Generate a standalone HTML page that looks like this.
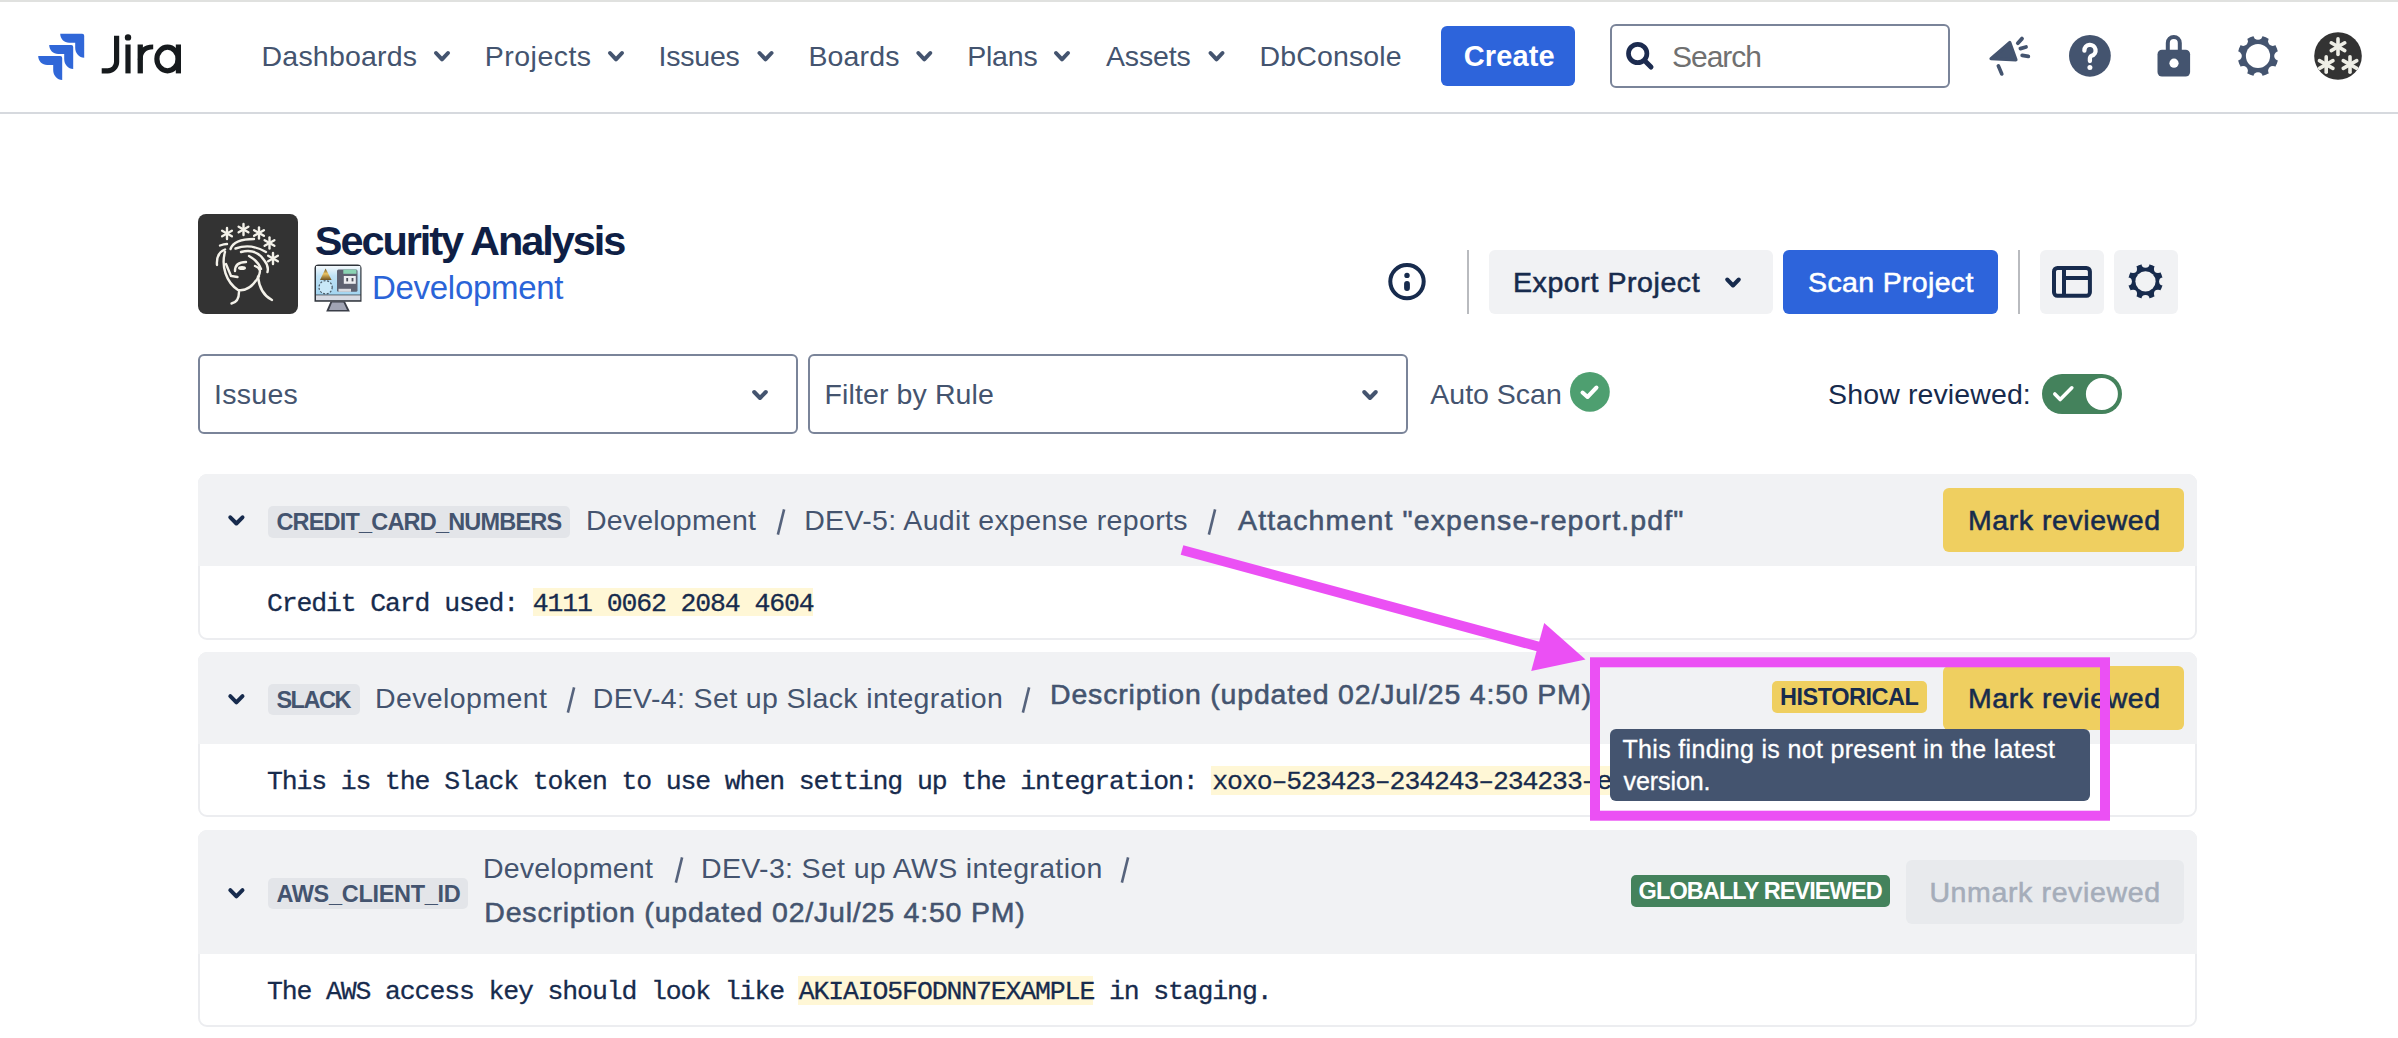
<!DOCTYPE html>
<html><head><meta charset="utf-8"><style>
html,body{margin:0;padding:0;background:#fff;width:2398px;height:1038px;overflow:hidden;position:relative}
.t{position:absolute;white-space:nowrap;font-family:"Liberation Sans",sans-serif}
.r{position:absolute}
.m{position:absolute;white-space:nowrap}
</style></head><body>
<div class="r" style="left:0px;top:0px;width:2398px;height:2px;background:#E0E1DF;border-radius:0px;"></div>
<div class="r" style="left:0px;top:112px;width:2398px;height:2px;background:#D6D9DE;border-radius:0px;"></div>
<svg class="r" style="left:0;top:0" width="120" height="100"><path transform="translate(60.2,33.7)" d="M0,0 H22 Q24,0 24,2 V24 C19,24 15,19.5 15,14 V9 H9 C4,9 0,5 0,0 Z" fill="#3067D8"/><path transform="translate(49.2,44.9)" d="M0,0 H22 Q24,0 24,2 V24 C19,24 15,19.5 15,14 V9 H9 C4,9 0,5 0,0 Z" fill="#3067D8"/><path transform="translate(38.2,56.1)" d="M0,0 H22 Q24,0 24,2 V24 C19,24 15,19.5 15,14 V9 H9 C4,9 0,5 0,0 Z" fill="#3067D8"/></svg>
<svg class="r" style="left:0;top:0" width="200" height="100"><g fill="#161A1D"><rect x="125.4" y="44.5" width="5.2" height="28.9"/><circle cx="128" cy="37.4" r="3.2"/><rect x="137.6" y="44.5" width="5.3" height="28.9"/><rect x="175.8" y="44.5" width="5.2" height="28.9"/></g><g fill="none" stroke="#161A1D" stroke-width="5.2"><path d="M116.6,35.8 V62 A8.8,8.8 0 0 1 107.8,70.8 H101.7"/><path d="M140.2,60 Q140.2,46.8 153.2,46.8" stroke-width="4.8"/><ellipse cx="167.5" cy="59" rx="10.6" ry="11.8"/></g></svg>
<div class="t" style="left:261.60px;top:41.91px;font-size:28.5px;line-height:28.5px;color:#44546F;letter-spacing:0.198px;">Dashboards</div>
<svg class="r" style="left:0;top:0" width="2398" height="1038"><polyline points="436.0,53.0 442,59.400000000000006 448.0,53.0" fill="none" stroke="#44546F" stroke-width="4.0" stroke-linecap="round" stroke-linejoin="round"/></svg>
<div class="t" style="left:484.80px;top:41.91px;font-size:28.5px;line-height:28.5px;color:#44546F;letter-spacing:0.474px;">Projects</div>
<svg class="r" style="left:0;top:0" width="2398" height="1038"><polyline points="610.0,53.0 616,59.400000000000006 622.0,53.0" fill="none" stroke="#44546F" stroke-width="4.0" stroke-linecap="round" stroke-linejoin="round"/></svg>
<div class="t" style="left:658.60px;top:41.91px;font-size:28.5px;line-height:28.5px;color:#44546F;letter-spacing:-0.233px;">Issues</div>
<svg class="r" style="left:0;top:0" width="2398" height="1038"><polyline points="759.5,53.0 765.5,59.400000000000006 771.5,53.0" fill="none" stroke="#44546F" stroke-width="4.0" stroke-linecap="round" stroke-linejoin="round"/></svg>
<div class="t" style="left:808.40px;top:41.91px;font-size:28.5px;line-height:28.5px;color:#44546F;letter-spacing:0.171px;">Boards</div>
<svg class="r" style="left:0;top:0" width="2398" height="1038"><polyline points="918.3,53.0 924.3,59.400000000000006 930.3,53.0" fill="none" stroke="#44546F" stroke-width="4.0" stroke-linecap="round" stroke-linejoin="round"/></svg>
<div class="t" style="left:967.20px;top:41.91px;font-size:28.5px;line-height:28.5px;color:#44546F;letter-spacing:-0.213px;">Plans</div>
<svg class="r" style="left:0;top:0" width="2398" height="1038"><polyline points="1056.0,53.0 1062,59.400000000000006 1068.0,53.0" fill="none" stroke="#44546F" stroke-width="4.0" stroke-linecap="round" stroke-linejoin="round"/></svg>
<div class="t" style="left:1106.00px;top:41.91px;font-size:28.5px;line-height:28.5px;color:#44546F;letter-spacing:-0.140px;">Assets</div>
<svg class="r" style="left:0;top:0" width="2398" height="1038"><polyline points="1210.5,53.0 1216.5,59.400000000000006 1222.5,53.0" fill="none" stroke="#44546F" stroke-width="4.0" stroke-linecap="round" stroke-linejoin="round"/></svg>
<div class="t" style="left:1259.60px;top:41.91px;font-size:28.5px;line-height:28.5px;color:#44546F;letter-spacing:0.133px;">DbConsole</div>
<div class="r" style="left:1441px;top:26px;width:134px;height:60px;background:#2D64DB;border-radius:6px;"></div>
<div class="t" style="left:1463.80px;top:42.10px;font-size:29.0px;line-height:29.0px;color:#FFFFFF;letter-spacing:0.093px;font-weight:700;">Create</div>
<div class="r" style="left:1610px;top:24px;width:340px;height:64px;background:#FFFFFF;border-radius:6px;border:2px solid #7A8499;box-sizing:border-box;"></div>
<svg class="r" style="left:0;top:0" width="2398" height="120"><circle cx="1637.7" cy="53.5" r="9.2" fill="none" stroke="#1C2B4F" stroke-width="4.7"/><line x1="1646" y1="62" x2="1651" y2="67" stroke="#1C2B4F" stroke-width="5" stroke-linecap="round"/></svg>
<div class="t" style="left:1672.00px;top:41.91px;font-size:30.0px;line-height:30.0px;color:#707070;letter-spacing:-1.020px;">Search</div>
<svg class="r" style="left:0;top:0" width="2398" height="120"><path d="M1991,58.6 L2009.8,42.5 L2016,59.8 Z" fill="#44546F" stroke="#44546F" stroke-width="3.2" stroke-linejoin="round"/><line x1="1998.3" y1="65.8" x2="2001.8" y2="74" stroke="#44546F" stroke-width="3.6" stroke-linecap="round"/><line x1="2017.8" y1="43.2" x2="2022" y2="38.6" stroke="#44546F" stroke-width="3.8" stroke-linecap="round"/><line x1="2020.4" y1="48.6" x2="2026" y2="47" stroke="#44546F" stroke-width="3.8" stroke-linecap="round"/><line x1="2022.2" y1="55.4" x2="2028.3" y2="56.4" stroke="#44546F" stroke-width="3.8" stroke-linecap="round"/><circle cx="2089.9" cy="55.8" r="20.9" fill="#44546F"/><path d="M2084.4,50.6 A5.6,5.6 0 1 1 2091.5,55.8 Q2089.9,56.6 2089.9,58.6 V61" fill="none" stroke="#fff" stroke-width="4.3" stroke-linecap="round"/><circle cx="2089.9" cy="67.6" r="2.5" fill="#fff"/><rect x="2157.5" y="49.7" width="32.6" height="26.8" rx="4.5" fill="#44546F"/><path d="M2167.8,50 V43 A6,6 0 0 1 2179.8,43 V50" fill="none" stroke="#44546F" stroke-width="4"/><circle cx="2174" cy="63.2" r="4.6" fill="#fff"/><circle cx="2338" cy="56" r="23.8" fill="#333333"/></svg>
<svg class="r" style="left:0;top:0" width="2398" height="120"><mask id="g1"><rect x="2235.6" y="33.6" width="44.8" height="44.8" fill="#fff"/><circle cx="2258.00" cy="35.10" r="4.7" fill="#000"/><circle cx="2272.78" cy="41.22" r="4.7" fill="#000"/><circle cx="2278.90" cy="56.00" r="4.7" fill="#000"/><circle cx="2272.78" cy="70.78" r="4.7" fill="#000"/><circle cx="2258.00" cy="76.90" r="4.7" fill="#000"/><circle cx="2243.22" cy="70.78" r="4.7" fill="#000"/><circle cx="2237.10" cy="56.00" r="4.7" fill="#000"/><circle cx="2243.22" cy="41.22" r="4.7" fill="#000"/><circle cx="2258" cy="56" r="12.1" fill="#000"/></mask><circle cx="2258" cy="56" r="20.4" fill="#44546F" mask="url(#g1)"/></svg>
<svg class="r" style="left:0;top:0" width="2398" height="120"><defs><clipPath id="avc"><circle cx="2338" cy="56" r="23.8"/></clipPath><filter id="avb" x="-10%" y="-10%" width="120%" height="120%"><feGaussianBlur stdDeviation="0.7"/></filter></defs><g clip-path="url(#avc)" filter="url(#avb)"><line x1="2338.00" y1="38.90" x2="2338.00" y2="54.50" stroke="#EEEEE6" stroke-width="3.6" stroke-linecap="round"/><line x1="2331.25" y1="42.80" x2="2344.75" y2="50.60" stroke="#EEEEE6" stroke-width="3.6" stroke-linecap="round"/><line x1="2331.25" y1="50.60" x2="2344.75" y2="42.80" stroke="#EEEEE6" stroke-width="3.6" stroke-linecap="round"/><line x1="2326.20" y1="56.70" x2="2326.20" y2="72.30" stroke="#EEEEE6" stroke-width="3.6" stroke-linecap="round"/><line x1="2319.45" y1="60.60" x2="2332.95" y2="68.40" stroke="#EEEEE6" stroke-width="3.6" stroke-linecap="round"/><line x1="2319.45" y1="68.40" x2="2332.95" y2="60.60" stroke="#EEEEE6" stroke-width="3.6" stroke-linecap="round"/><line x1="2350.00" y1="56.70" x2="2350.00" y2="72.30" stroke="#EEEEE6" stroke-width="3.6" stroke-linecap="round"/><line x1="2343.25" y1="60.60" x2="2356.75" y2="68.40" stroke="#EEEEE6" stroke-width="3.6" stroke-linecap="round"/><line x1="2343.25" y1="68.40" x2="2356.75" y2="60.60" stroke="#EEEEE6" stroke-width="3.6" stroke-linecap="round"/></g></svg>
<div class="r" style="left:198px;top:214px;width:100px;height:100px;background:#333333;border-radius:8px;"></div>
<svg class="r" style="left:198px;top:214px" width="100" height="100" viewBox="0 0 100 100"><g fill="none" stroke="#F4F2EA" stroke-width="2.4" stroke-linecap="round"><path d="M32.5,35 Q36,25 56,25"/><path d="M37.5,34.5 Q53,29 68,38"/><path d="M43,38 Q58,34 66,46 Q71,52 69.5,58"/><path d="M22,31.5 Q26,30 29,30"/><path d="M19,51 Q18,39 27,35.5"/><path d="M27,38 C23,52 28,68 40,76 Q52,78 61,62"/><path d="M41,78 Q41,88 33.5,89.5"/><path d="M60,63 Q62,80 74,86"/><path d="M57,52 Q65,55 60,63"/><path d="M37,57 Q37,48 48,48"/><path d="M28,50 L33,62 L39.5,63"/><path d="M51,42 Q60,47 63,55"/></g><g><line x1="29.00" y1="13.90" x2="29.00" y2="25.10" stroke="#F4F2EA" stroke-width="2.4" stroke-linecap="round"/><line x1="24.15" y1="16.70" x2="33.85" y2="22.30" stroke="#F4F2EA" stroke-width="2.4" stroke-linecap="round"/><line x1="24.15" y1="22.30" x2="33.85" y2="16.70" stroke="#F4F2EA" stroke-width="2.4" stroke-linecap="round"/><line x1="45.50" y1="9.90" x2="45.50" y2="21.10" stroke="#F4F2EA" stroke-width="2.4" stroke-linecap="round"/><line x1="40.65" y1="12.70" x2="50.35" y2="18.30" stroke="#F4F2EA" stroke-width="2.4" stroke-linecap="round"/><line x1="40.65" y1="18.30" x2="50.35" y2="12.70" stroke="#F4F2EA" stroke-width="2.4" stroke-linecap="round"/><line x1="61.00" y1="13.40" x2="61.00" y2="24.60" stroke="#F4F2EA" stroke-width="2.4" stroke-linecap="round"/><line x1="56.15" y1="16.20" x2="65.85" y2="21.80" stroke="#F4F2EA" stroke-width="2.4" stroke-linecap="round"/><line x1="56.15" y1="21.80" x2="65.85" y2="16.20" stroke="#F4F2EA" stroke-width="2.4" stroke-linecap="round"/><line x1="71.50" y1="23.40" x2="71.50" y2="34.60" stroke="#F4F2EA" stroke-width="2.4" stroke-linecap="round"/><line x1="66.65" y1="26.20" x2="76.35" y2="31.80" stroke="#F4F2EA" stroke-width="2.4" stroke-linecap="round"/><line x1="66.65" y1="31.80" x2="76.35" y2="26.20" stroke="#F4F2EA" stroke-width="2.4" stroke-linecap="round"/><line x1="75.00" y1="38.90" x2="75.00" y2="50.10" stroke="#F4F2EA" stroke-width="2.4" stroke-linecap="round"/><line x1="70.15" y1="41.70" x2="79.85" y2="47.30" stroke="#F4F2EA" stroke-width="2.4" stroke-linecap="round"/><line x1="70.15" y1="47.30" x2="79.85" y2="41.70" stroke="#F4F2EA" stroke-width="2.4" stroke-linecap="round"/><ellipse cx="44" cy="54" rx="4" ry="2" fill="#F4F2EA"/></g></svg>
<div class="t" style="left:314.80px;top:220.01px;font-size:41.5px;line-height:41.5px;color:#0F1F45;letter-spacing:-2.053px;font-weight:700;">Security Analysis</div>
<svg class="r" style="left:314px;top:264px" width="48" height="48" viewBox="0 0 48 48"><defs><linearGradient id="scr" x1="0" y1="0" x2="0" y2="1"><stop offset="0" stop-color="#F4F9FC"/><stop offset="0.35" stop-color="#BFE2F5"/><stop offset="1" stop-color="#A3D5F1"/></linearGradient><linearGradient id="cone" x1="0" y1="0" x2="0" y2="1"><stop offset="0" stop-color="#6B5120"/><stop offset="0.45" stop-color="#EBC463"/><stop offset="1" stop-color="#6E5220"/></linearGradient></defs><path d="M0.5,4.5 Q0.5,0.5 4.5,0.5 H43.5 Q47.5,0.5 47.5,4.5 V37.8 H0.5 Z" fill="#2F343B"/><rect x="2" y="2" width="44.3" height="28.6" fill="url(#scr)"/><rect x="2" y="31.3" width="44.3" height="4.9" fill="#D6DAE3"/><path d="M16.5,37.6 H31 L35.9,47.6 H12.2 Z" fill="#3A3E48"/><path d="M18,38.5 H29.5 L33,46 H15 Z" fill="#A0A4B4"/><circle cx="11.6" cy="23.3" r="6.6" fill="#C9E8F8" stroke="#4A5A66" stroke-width="1.2" stroke-dasharray="2 1.6"/><path d="M6,16 L11.6,4.6 L17.6,16 Z" fill="url(#cone)"/><rect x="23" y="5.5" width="20.5" height="22.3" rx="1.5" fill="#5E6271"/><rect x="24.5" y="24.8" width="12.5" height="3" fill="#D9DBE1"/><rect x="29.3" y="5.6" width="13.2" height="4.2" fill="#8AD3B2"/><rect x="29.8" y="12" width="12" height="7.8" fill="#ECEDF0"/><rect x="32.3" y="14" width="1.8" height="3.4" fill="#4B4F5A"/><rect x="37.6" y="14" width="1.8" height="3.4" fill="#4B4F5A"/></svg>
<div class="t" style="left:372.00px;top:271.31px;font-size:33.0px;line-height:33.0px;color:#2A64D8;letter-spacing:-0.297px;">Development</div>
<svg class="r" style="left:0;top:0" width="2398" height="330"><circle cx="1407" cy="281.6" r="16.7" fill="none" stroke="#172B4D" stroke-width="4"/><circle cx="1407" cy="275.4" r="2.7" fill="#172B4D"/><line x1="1407" y1="284" x2="1407" y2="288" stroke="#172B4D" stroke-width="5.8" stroke-linecap="round"/></svg>
<div class="r" style="left:1467px;top:250px;width:2px;height:64px;background:#B9BBBF;border-radius:0px;"></div>
<div class="r" style="left:1489px;top:250px;width:284px;height:64px;background:#F1F2F4;border-radius:6px;"></div>
<div class="t" style="left:1513.00px;top:267.80px;font-size:28.5px;line-height:28.5px;color:#172B4D;letter-spacing:0.586px;-webkit-text-stroke:0.55px #172B4D;">Export Project</div>
<svg class="r" style="left:0;top:0" width="2398" height="1038"><polyline points="1727.2,279.5 1733,285.5 1738.8,279.5" fill="none" stroke="#172B4D" stroke-width="4.0" stroke-linecap="round" stroke-linejoin="round"/></svg>
<div class="r" style="left:1783px;top:250px;width:215px;height:64px;background:#2D64DB;border-radius:6px;"></div>
<div class="t" style="left:1808.10px;top:267.80px;font-size:28.5px;line-height:28.5px;color:#FFFFFF;letter-spacing:0.337px;-webkit-text-stroke:0.55px #FFFFFF;">Scan Project</div>
<div class="r" style="left:2018px;top:250px;width:2px;height:64px;background:#B9BBBF;border-radius:0px;"></div>
<div class="r" style="left:2040px;top:250px;width:64px;height:64px;background:#F1F2F4;border-radius:6px;"></div>
<div class="r" style="left:2114px;top:250px;width:64px;height:64px;background:#F1F2F4;border-radius:6px;"></div>
<svg class="r" style="left:0;top:0" width="2398" height="330"><rect x="2054" y="267.9" width="35.9" height="27.9" rx="3.5" fill="none" stroke="#172B4D" stroke-width="4"/><line x1="2064" y1="268" x2="2064" y2="296" stroke="#172B4D" stroke-width="4"/><line x1="2064" y1="278" x2="2090" y2="278" stroke="#172B4D" stroke-width="4"/><mask id="g2"><rect x="2126.1" y="262.0" width="38.8" height="38.8" fill="#fff"/><circle cx="2145.50" cy="263.80" r="4.0" fill="#000"/><circle cx="2157.95" cy="268.95" r="4.0" fill="#000"/><circle cx="2163.10" cy="281.40" r="4.0" fill="#000"/><circle cx="2157.95" cy="293.85" r="4.0" fill="#000"/><circle cx="2145.50" cy="299.00" r="4.0" fill="#000"/><circle cx="2133.05" cy="293.85" r="4.0" fill="#000"/><circle cx="2127.90" cy="281.40" r="4.0" fill="#000"/><circle cx="2133.05" cy="268.95" r="4.0" fill="#000"/><circle cx="2145.5" cy="281.4" r="10.1" fill="#000"/></mask><circle cx="2145.5" cy="281.4" r="17.4" fill="#172B4D" mask="url(#g2)"/></svg>
<div class="r" style="left:198px;top:354px;width:600px;height:80px;background:#FFFFFF;border-radius:6px;border:2px solid #7A8499;box-sizing:border-box;"></div>
<div class="t" style="left:214.00px;top:379.90px;font-size:28.5px;line-height:28.5px;color:#44546F;letter-spacing:0.287px;">Issues</div>
<svg class="r" style="left:0;top:0" width="2398" height="1038"><polyline points="754.2,392.0 760,398.0 765.8,392.0" fill="none" stroke="#44546F" stroke-width="4.0" stroke-linecap="round" stroke-linejoin="round"/></svg>
<div class="r" style="left:808px;top:354px;width:600px;height:80px;background:#FFFFFF;border-radius:6px;border:2px solid #7A8499;box-sizing:border-box;"></div>
<div class="t" style="left:824.60px;top:379.90px;font-size:28.5px;line-height:28.5px;color:#44546F;letter-spacing:0.103px;">Filter by Rule</div>
<svg class="r" style="left:0;top:0" width="2398" height="1038"><polyline points="1364.2,392.0 1370,398.0 1375.8,392.0" fill="none" stroke="#44546F" stroke-width="4.0" stroke-linecap="round" stroke-linejoin="round"/></svg>
<div class="t" style="left:1430.30px;top:379.90px;font-size:28.5px;line-height:28.5px;color:#44546F;letter-spacing:-0.003px;">Auto Scan</div>
<svg class="r" style="left:0;top:0" width="2398" height="440"><circle cx="1589.9" cy="391.8" r="19.9" fill="#4E9F70"/><polyline points="1582.5,392.5 1587.5,397 1596.5,387.5" fill="none" stroke="#fff" stroke-width="4" stroke-linecap="round" stroke-linejoin="round"/><rect x="2042" y="374" width="80" height="40" rx="20" fill="#44825C"/><circle cx="2101.9" cy="394" r="16" fill="#fff"/><polyline points="2054.8,394 2060.2,399.5 2071.8,387.8" fill="none" stroke="#fff" stroke-width="3.6" stroke-linecap="round" stroke-linejoin="round"/></svg>
<div class="t" style="left:1828.10px;top:379.90px;font-size:28.5px;line-height:28.5px;color:#172B4D;letter-spacing:0.115px;">Show reviewed:</div>
<div class="r" style="left:198px;top:474px;width:1999px;height:166px;background:#FFFFFF;border-radius:9px;border:2px solid #ECEDF0;box-sizing:border-box;"></div><div class="r" style="left:198px;top:474px;width:1999px;height:92px;background:#F1F2F4;border-radius:0px;border-radius:9px 9px 0 0;"></div>
<svg class="r" style="left:0;top:0" width="2398" height="1038"><polyline points="230.3,517.3 236.4,523.5 242.5,517.3" fill="none" stroke="#172B4D" stroke-width="4.0" stroke-linecap="round" stroke-linejoin="round"/></svg>
<div class="r" style="left:268px;top:506.3px;width:302px;height:31.400000000000034px;background:#E3E5E9;border-radius:5px;"></div>
<div class="t" style="left:276.40px;top:511.30px;font-size:23.5px;line-height:23.5px;color:#44546F;letter-spacing:-0.807px;font-weight:700;">CREDIT_CARD_NUMBERS</div>
<div class="t" style="left:586.00px;top:506.30px;font-size:28.5px;line-height:28.5px;color:#44546F;letter-spacing:0.193px;">Development</div>
<svg class="r" style="left:776.4px;top:506.9px" width="10" height="30"><line x1="8.1" y1="2.3499999999999996" x2="1.9" y2="27.65" stroke="#56637C" stroke-width="2.6"/></svg>
<div class="t" style="left:804.20px;top:506.30px;font-size:28.5px;line-height:28.5px;color:#44546F;letter-spacing:0.351px;">DEV-5: Audit expense reports</div>
<svg class="r" style="left:1206.9px;top:506.9px" width="10" height="30"><line x1="8.1" y1="2.3499999999999996" x2="1.9" y2="27.65" stroke="#56637C" stroke-width="2.6"/></svg>
<div class="t" style="left:1238.00px;top:506.00px;font-size:28.5px;line-height:28.5px;color:#44546F;letter-spacing:1.129px;-webkit-text-stroke:0.55px #44546F;">Attachment "expense-report.pdf"</div>
<div class="r" style="left:1943px;top:488px;width:241px;height:64px;background:#EFCF60;border-radius:6px;"></div>
<div class="t" style="left:1968.00px;top:505.81px;font-size:28.5px;line-height:28.5px;color:#172B4D;letter-spacing:0.563px;-webkit-text-stroke:0.55px #172B4D;">Mark reviewed</div>
<div class="r" style="left:533px;top:588.4px;width:280.29999999999995px;height:28.0px;background:#FFF7D6;border-radius:0px;"></div>
<div class="m" style="left:266.90px;top:591px;font-family:'Liberation Mono',monospace;font-size:26.5px;line-height:26.5px;color:#172B4D;letter-spacing:-1.130px;-webkit-text-stroke:0.28px #172B4D">Credit Card used: 4111 0062 2084 4604</div>
<div class="r" style="left:198px;top:652px;width:1999px;height:165px;background:#FFFFFF;border-radius:9px;border:2px solid #ECEDF0;box-sizing:border-box;"></div><div class="r" style="left:198px;top:652px;width:1999px;height:92px;background:#F1F2F4;border-radius:0px;border-radius:9px 9px 0 0;"></div>
<svg class="r" style="left:0;top:0" width="2398" height="1038"><polyline points="230.3,696.1 236.4,702.3000000000001 242.5,696.1" fill="none" stroke="#172B4D" stroke-width="4.0" stroke-linecap="round" stroke-linejoin="round"/></svg>
<div class="r" style="left:268px;top:684px;width:92px;height:31.299999999999955px;background:#E3E5E9;border-radius:5px;"></div>
<div class="t" style="left:276.40px;top:689.00px;font-size:23.5px;line-height:23.5px;color:#44546F;letter-spacing:-1.489px;font-weight:700;">SLACK</div>
<div class="t" style="left:375.00px;top:684.20px;font-size:28.5px;line-height:28.5px;color:#44546F;letter-spacing:0.393px;">Development</div>
<svg class="r" style="left:565.6px;top:684.8px" width="10" height="30"><line x1="8.1" y1="2.3499999999999996" x2="1.9" y2="27.65" stroke="#56637C" stroke-width="2.6"/></svg>
<div class="t" style="left:592.80px;top:684.20px;font-size:28.5px;line-height:28.5px;color:#44546F;letter-spacing:0.364px;">DEV-4: Set up Slack integration</div>
<svg class="r" style="left:1021.2px;top:684.8px" width="10" height="30"><line x1="8.1" y1="2.3499999999999996" x2="1.9" y2="27.65" stroke="#56637C" stroke-width="2.6"/></svg>
<div class="t" style="left:1050.00px;top:680.00px;font-size:28.5px;line-height:28.5px;color:#44546F;letter-spacing:0.817px;-webkit-text-stroke:0.55px #44546F;">Description (updated 02/Jul/25 4:50 PM)</div>
<div class="r" style="left:1210.7px;top:766px;width:549.3px;height:28.700000000000045px;background:#FFF7D6;border-radius:0px;"></div>
<div class="m" style="left:266.90px;top:768.6px;font-family:'Liberation Mono',monospace;font-size:26.5px;line-height:26.5px;color:#172B4D;letter-spacing:-1.130px;-webkit-text-stroke:0.28px #172B4D">This is the Slack token to use when setting up the integration: xoxo–523423–234243–234233–e&nbsp;&nbsp;&nbsp;&nbsp;</div>
<div class="r" style="left:1772px;top:681.4px;width:155px;height:31.200000000000045px;background:#EFCF60;border-radius:5px;"></div>
<div class="t" style="left:1780.00px;top:685.91px;font-size:23.5px;line-height:23.5px;color:#172B4D;letter-spacing:-0.492px;font-weight:700;">HISTORICAL</div>
<div class="r" style="left:1943px;top:666px;width:241px;height:63.5px;background:#EFCF60;border-radius:6px;"></div>
<div class="t" style="left:1968.00px;top:684.01px;font-size:28.5px;line-height:28.5px;color:#172B4D;letter-spacing:0.563px;-webkit-text-stroke:0.55px #172B4D;">Mark reviewed</div>
<div class="r" style="left:198px;top:830px;width:1999px;height:197px;background:#FFFFFF;border-radius:9px;border:2px solid #ECEDF0;box-sizing:border-box;"></div><div class="r" style="left:198px;top:830px;width:1999px;height:123.5px;background:#F1F2F4;border-radius:0px;border-radius:9px 9px 0 0;"></div>
<svg class="r" style="left:0;top:0" width="2398" height="1038"><polyline points="230.3,890.1 236.4,896.3000000000001 242.5,890.1" fill="none" stroke="#172B4D" stroke-width="4.0" stroke-linecap="round" stroke-linejoin="round"/></svg>
<div class="r" style="left:268px;top:878.1px;width:199.7px;height:31.399999999999977px;background:#E3E5E9;border-radius:5px;"></div>
<div class="t" style="left:276.40px;top:883.11px;font-size:23.5px;line-height:23.5px;color:#44546F;letter-spacing:-0.317px;font-weight:700;">AWS_CLIENT_ID</div>
<div class="t" style="left:483.00px;top:854.11px;font-size:28.5px;line-height:28.5px;color:#44546F;letter-spacing:0.193px;">Development</div>
<svg class="r" style="left:673.6px;top:854.9px" width="10" height="30"><line x1="8.1" y1="2.3499999999999996" x2="1.9" y2="27.65" stroke="#56637C" stroke-width="2.6"/></svg>
<div class="t" style="left:701.00px;top:854.11px;font-size:28.5px;line-height:28.5px;color:#44546F;letter-spacing:0.340px;">DEV-3: Set up AWS integration</div>
<svg class="r" style="left:1120px;top:854.9px" width="10" height="30"><line x1="8.1" y1="2.3499999999999996" x2="1.9" y2="27.65" stroke="#56637C" stroke-width="2.6"/></svg>
<div class="t" style="left:484.30px;top:898.41px;font-size:28.5px;line-height:28.5px;color:#44546F;letter-spacing:0.799px;-webkit-text-stroke:0.55px #44546F;">Description (updated 02/Jul/25 4:50 PM)</div>
<div class="r" style="left:1631px;top:874.8px;width:259px;height:32.10000000000002px;background:#44825C;border-radius:5px;"></div>
<div class="t" style="left:1638.60px;top:879.91px;font-size:23.5px;line-height:23.5px;color:#FFFFFF;letter-spacing:-0.906px;font-weight:700;">GLOBALLY REVIEWED</div>
<div class="r" style="left:1906px;top:860px;width:278px;height:64px;background:#E8EAED;border-radius:6px;"></div>
<div class="t" style="left:1929.40px;top:877.81px;font-size:28.5px;line-height:28.5px;color:#A5ADBA;letter-spacing:0.634px;-webkit-text-stroke:0.55px #A5ADBA;">Unmark reviewed</div>
<div class="r" style="left:798px;top:976.4px;width:294.79999999999995px;height:28.700000000000045px;background:#FFF7D6;border-radius:0px;"></div>
<div class="m" style="left:266.90px;top:979px;font-family:'Liberation Mono',monospace;font-size:26.5px;line-height:26.5px;color:#172B4D;letter-spacing:-1.130px;-webkit-text-stroke:0.28px #172B4D">The AWS access key should look like AKIAIO5FODNN7EXAMPLE in staging.</div>
<div class="r" style="left:1610px;top:729.4px;width:480px;height:71.30000000000007px;background:#44546F;border-radius:6px;"></div>
<div class="t" style="left:1622.50px;top:737.00px;font-size:25.0px;line-height:25.0px;color:#FFFFFF;letter-spacing:0.322px;-webkit-text-stroke:0.3px #fff;">This finding is not present in the latest</div>
<div class="t" style="left:1623.50px;top:769.00px;font-size:25.0px;line-height:25.0px;color:#FFFFFF;letter-spacing:-0.071px;-webkit-text-stroke:0.3px #fff;">version.</div>
<svg class="r" style="left:0;top:0" width="2398" height="1038"><line x1="1182" y1="550" x2="1540" y2="647" stroke="#EB50F4" stroke-width="10"/><path d="M1544.2,623 L1585.5,659.5 L1531.2,671 Z" fill="#EB50F4"/><rect x="1595" y="662.3" width="510" height="153.4" fill="none" stroke="#EB50F4" stroke-width="10"/></svg>
</body></html>
